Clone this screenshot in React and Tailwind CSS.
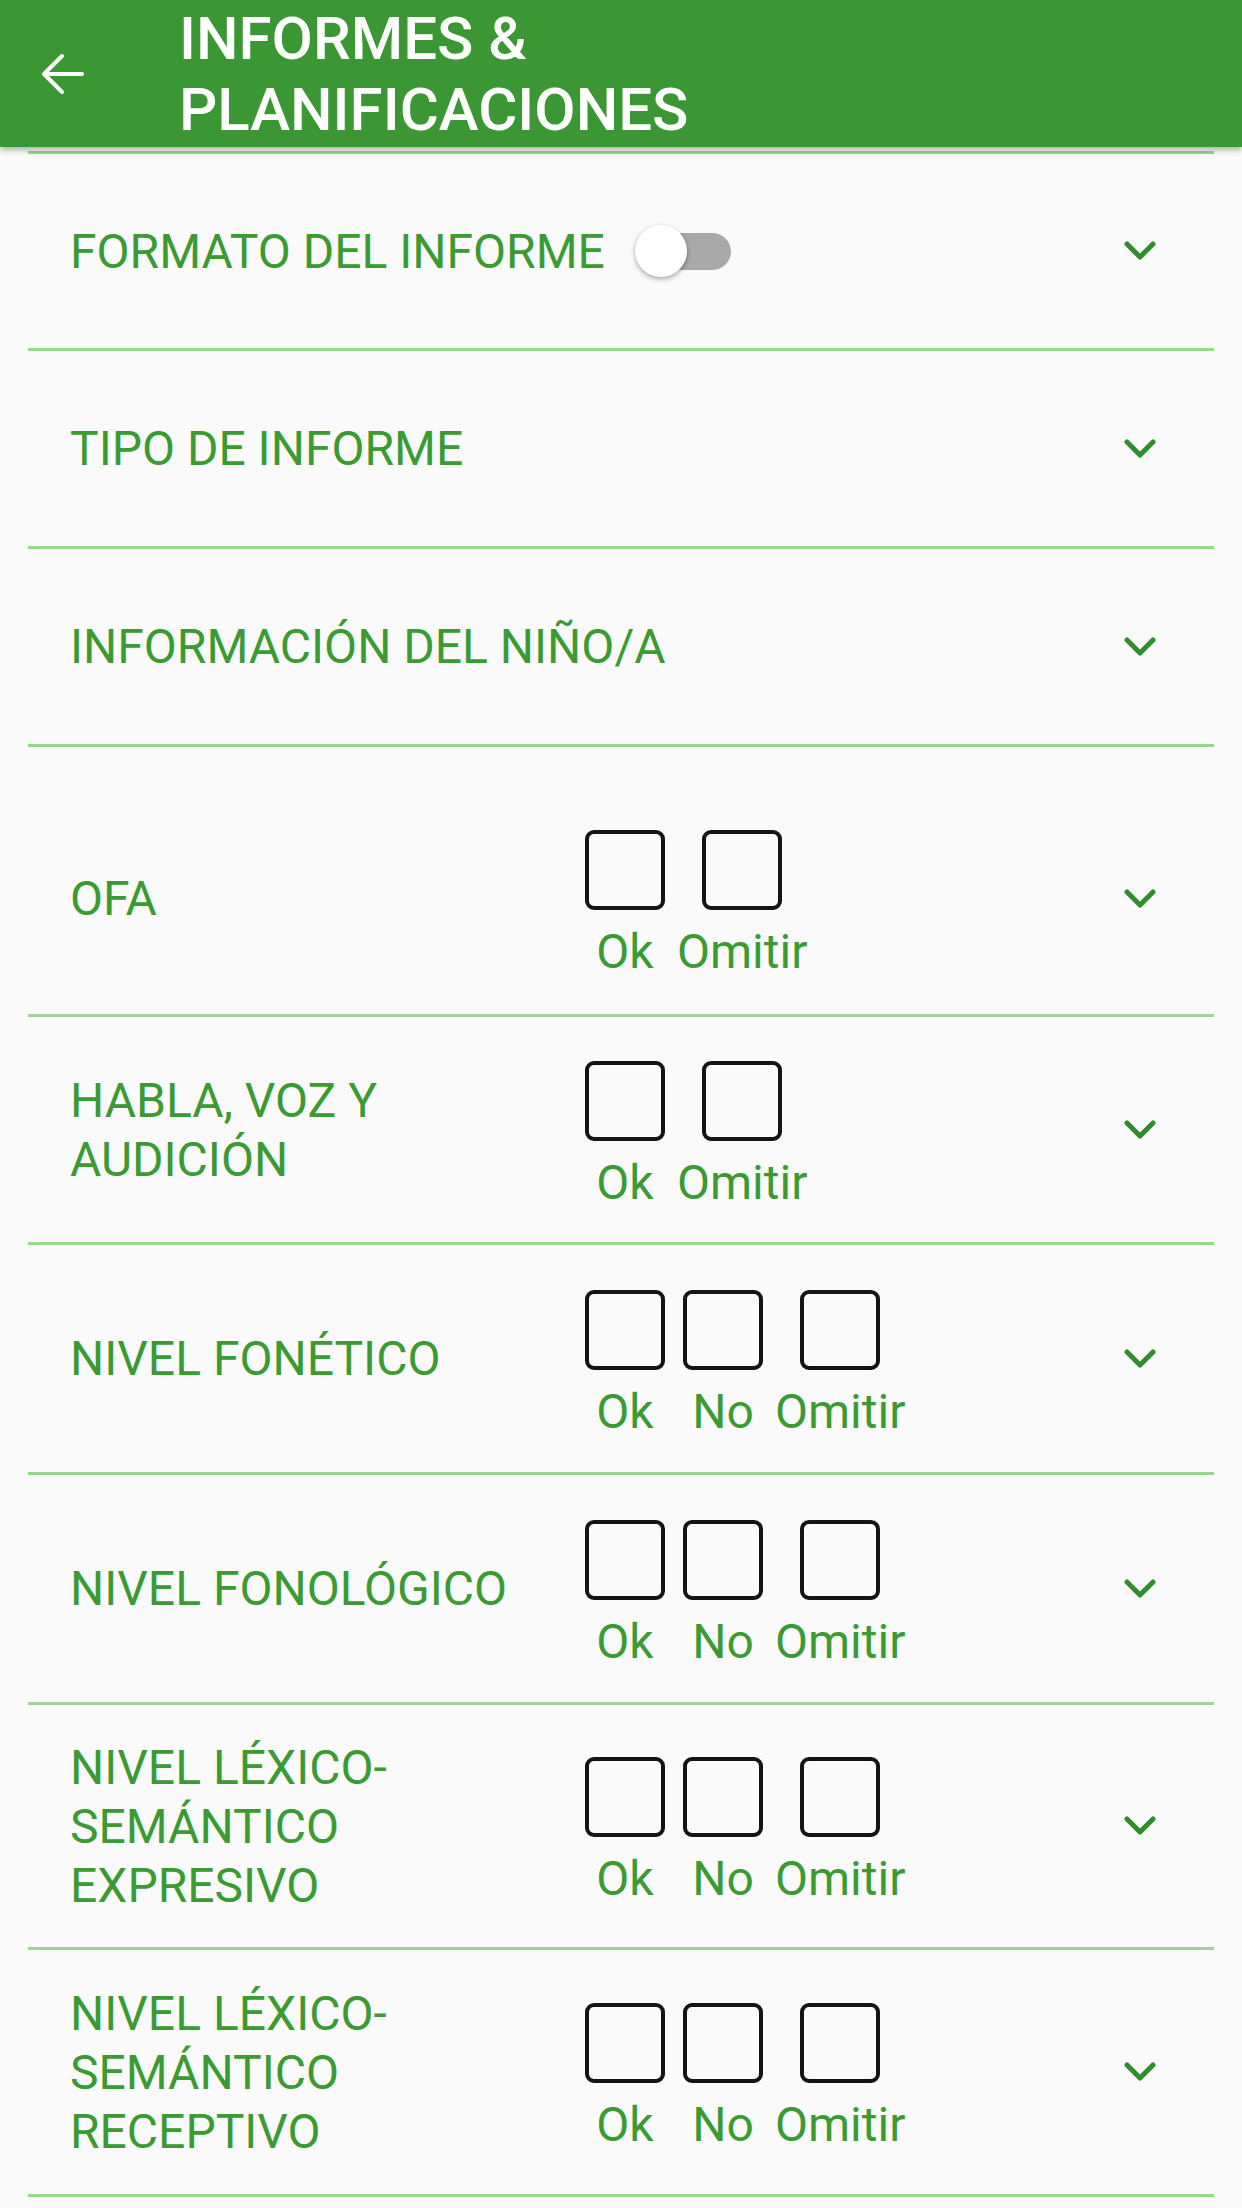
import { useState } from 'react';

const sections = [
    { lines: ['FORMATO DEL INFORME'], h: 'h-[194px]', toggle: true },
    { lines: ['TIPO DE INFORME'], h: 'h-[195px]' },
    { lines: ['INFORMACIÓN DEL NIÑO/A'], h: 'h-[195px]' },
    { lines: ['OFA'], h: 'h-[267px] pt-[36px]', checks: ['Ok', 'Omitir'] },
    { lines: ['HABLA, VOZ Y', 'AUDICIÓN'], h: 'h-[225px]', checks: ['Ok', 'Omitir'] },
    { lines: ['NIVEL FONÉTICO'], h: 'h-[227px]', checks: ['Ok', 'No', 'Omitir'] },
    { lines: ['NIVEL FONOLÓGICO'], h: 'h-[227px]', checks: ['Ok', 'No', 'Omitir'] },
    { lines: ['NIVEL LÉXICO-', 'SEMÁNTICO', 'EXPRESIVO'], h: 'h-[242px]', checks: ['Ok', 'No', 'Omitir'] },
    { lines: ['NIVEL LÉXICO-', 'SEMÁNTICO', 'RECEPTIVO'], h: 'h-[244px]', checks: ['Ok', 'No', 'Omitir'] },
];

function Separator() {
    return <div className='mx-[28px] h-[3px] bg-[#97d78e]' />;
}

function Chevron() {
    return (
        <svg width='32' height='22' viewBox='0 0 32 22' className='shrink-0'>
            <polyline points='3,4 16,17 29,4' fill='none' stroke='#2f8e2b' strokeWidth='5' strokeLinecap='round' strokeLinejoin='round' />
        </svg>
    );
}

function Toggle() {
    return (
        <div className='relative ml-[30px] h-[52px] w-[96px] shrink-0'>
            <div className='absolute left-[8px] right-0 top-[8px] h-[37px] rounded-full bg-[#a9a9a9]' />
            <div className='absolute left-0 top-0 h-[52px] w-[52px] rounded-full bg-white shadow-[0_2px_5px_rgba(0,0,0,0.35)]' />
        </div>
    );
}

function CheckGroup({ items }) {
    const [checked, setChecked] = useState({});
    return (
        <div className='mt-[6px] flex'>
            {items.map((label) => (
                <button
                    key={label}
                    onClick={() => setChecked({ ...checked, [label]: !checked[label] })}
                    className='flex min-w-[98px] flex-col items-center px-[3px]'
                >
                    <span className='h-[80px] w-[80px] rounded-[9px] border-[4px] border-[#141414]' />
                    <span className='mt-[20px] text-[48px] leading-[44px] text-[#3a9b32]'>{label}</span>
                </button>
            ))}
        </div>
    );
}

function Section({ item }) {
    return (
        <div className={`mx-[28px] flex items-center pl-[42px] pr-[58px] ${item.h}`}>
            <div className='flex w-[506px] shrink-0 items-center'>
                <div className='text-[48px] leading-[59px] text-[#3a9b32]'>
                    {item.lines.map((l) => (
                        <div key={l} className='whitespace-nowrap'>{l}</div>
                    ))}
                </div>
                {item.toggle && <Toggle />}
            </div>
            {item.checks && <CheckGroup items={item.checks} />}
            <div className='ml-auto'>
                <Chevron />
            </div>
        </div>
    );
}

export default function App() {
    return (
        <div className='min-h-screen bg-[#fafafa]' style={{ fontFamily: 'Roboto, "Noto Sans", sans-serif' }}>
            <header className='relative z-10 flex h-[147px] items-center bg-[#3a9733] shadow-[0_3px_6px_rgba(0,0,0,0.3)]'>
                <div className='flex w-[179px] justify-start pl-[40px]'>
                    <svg width='46' height='46' viewBox='0 0 46 46'>
                        <path d='M42 23H5M22 5L4 23l18 18' fill='none' stroke='white' strokeWidth='4' strokeLinecap='round' strokeLinejoin='round' />
                    </svg>
                </div>
                <h1 className='text-[60px] font-medium leading-[71px] text-white'>
                    INFORMES &amp;<br />PLANIFICACIONES
                </h1>
            </header>
            <div className='pt-[4px]'>
                <Separator />
                {sections.map((s, i) => (
                    <div key={i}>
                        <Section item={s} />
                        <Separator />
                    </div>
                ))}
            </div>
        </div>
    );
}
